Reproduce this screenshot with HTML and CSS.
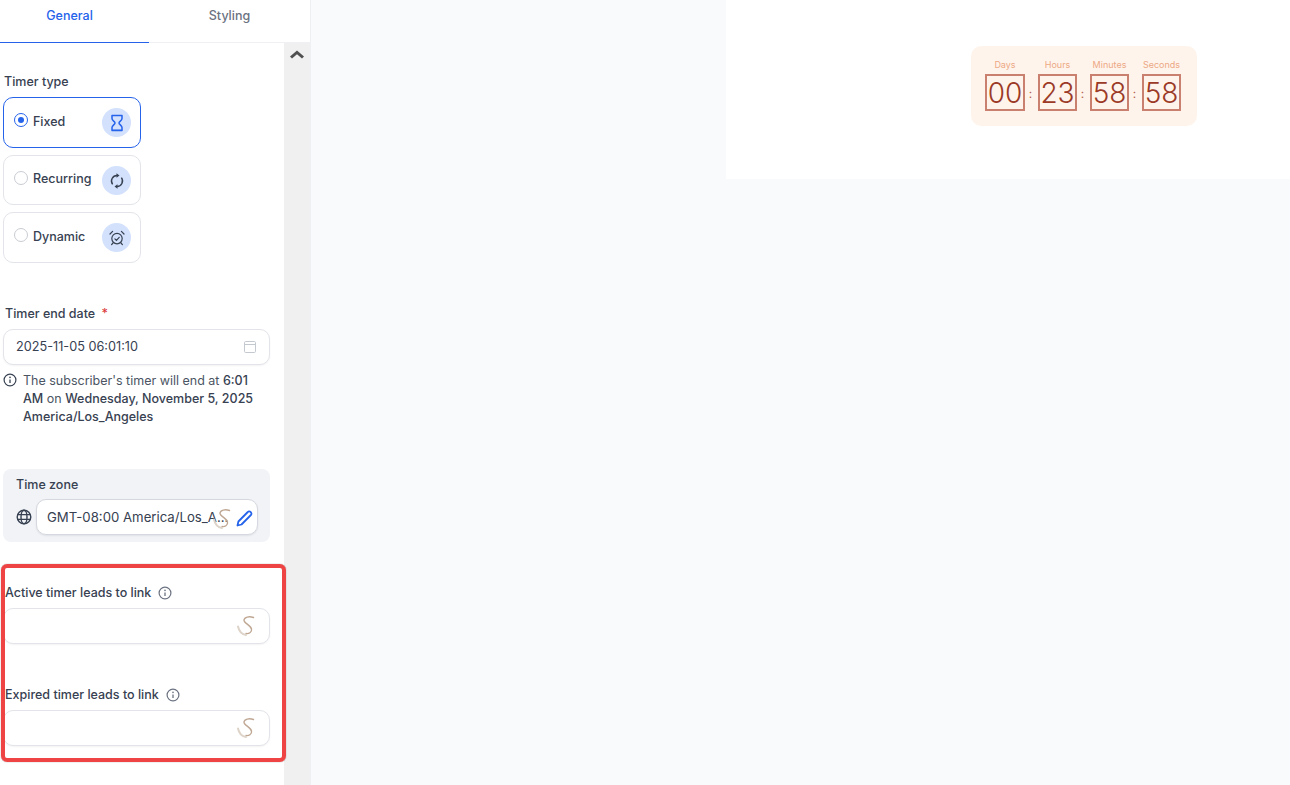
FILE: index.html
```html
<!DOCTYPE html>
<html lang="en">
<head>
<meta charset="utf-8">
<title>Timer settings</title>
<link rel="stylesheet" href="styles.css">
</head>
<body>
<svg class="defs" width="0" height="0" aria-hidden="true">
  <symbol id="squiggle" viewBox="0 0 20 22">
    <path d="M17.500 2.500 C13 1 8.500 2 8 5 C7.600 8 14.500 10 15.500 14 C16.200 17.500 12.500 19 10 18.500" fill="none" stroke="#bfa793" stroke-width="1.400" stroke-linecap="round"/>
    <path d="M2 11.500 C3 16 6 19.500 10 20" fill="none" stroke="#ddd3c8" stroke-width="2" stroke-linecap="round"/>
  </symbol>
  <symbol id="info" viewBox="0 0 14 14">
    <circle cx="7" cy="7" r="5.900" fill="none" stroke="currentColor" stroke-width="1.200"/>
    <path d="M7 6.400V10" stroke="currentColor" stroke-width="1.300"/>
    <circle cx="7" cy="4.400" r=".8" fill="currentColor"/>
  </symbol>
</svg>
<div class="app">
  <aside class="sidebar">
    <nav class="tabs">
      <div class="tab tab-active">General</div>
      <div class="tab">Styling</div>
    </nav>
    <div class="scroll-area">
      <main class="form">
        <div class="label type-label">Timer type</div>
        <div class="cards">
          <div class="card card-selected">
            <span class="radio radio-on"></span><span class="card-name">Fixed</span>
            <span class="badge">
              <svg width="16" height="18" viewBox="0 0 16 18" fill="none" stroke="#2563eb" stroke-width="1.500" stroke-linejoin="round"><path d="M3 15h10v2H3z" fill="#8fb1f5" stroke="none"/><path d="M3 1.500h10v3c0 2-3 3-3 4.500s3 2.500 3 4.500v3H3v-3c0-2 3-3 3-4.500S3 6.500 3 4.500z"/></svg>
            </span>
          </div>
          <div class="card card-recurring">
            <span class="radio"></span><span class="card-name">Recurring</span>
            <span class="badge">
              <svg width="16" height="16" viewBox="0 0 16 16" fill="none" stroke="#374151" stroke-width="1.400"><path d="M8 2.500A5.500 5.500 0 0 0 3.600 11.300"/><path d="M8 13.500A5.500 5.500 0 0 0 12.400 4.700"/><path d="M7.500 0.300v4.400L10.500 2.500z" fill="#374151" stroke="none"/><path d="M8.500 11.300v4.400L5.500 13.500z" fill="#374151" stroke="none"/></svg>
            </span>
          </div>
          <div class="card card-dynamic">
            <span class="radio"></span><span class="card-name">Dynamic</span>
            <span class="badge">
              <svg width="16" height="16" viewBox="0 0 16 16" fill="none" stroke="#374151" stroke-width="1.200" stroke-linecap="round"><circle cx="8" cy="8.600" r="5.200"/><path d="M5.900 8.800l1.500 1.500 2.800-3"/><path d="M1 4l2.600-2.600M15 4l-2.600-2.600M4 13l-1.400 1.600M12 13l1.400 1.600"/></svg>
            </span>
          </div>
        </div>

        <div class="label date-label">Timer end date <span class="req">*</span></div>
        <div class="field">
          <span class="field-text">2025-11-05 06:01:10</span>
          <svg class="cal" width="14" height="14" viewBox="0 0 14 14" fill="none" stroke="#c4c8cf" stroke-width="1"><rect x="1.500" y="1.500" width="11" height="11" rx="1.200"/><path d="M1.500 4.500h11"/></svg>
        </div>
        <div class="note">
          <svg class="note-icon"><use href="#info"/></svg>
          <p>The subscriber's timer will end at <b>6:01</b> <b>AM</b> on <b>Wednesday, November 5, 2025</b> <b>America/Los_Angeles</b></p>
        </div>

        <section class="zone">
          <div class="label zone-label">Time zone</div>
          <div class="zone-row">
            <svg class="globe" width="16" height="16" viewBox="0 0 16 16" fill="none" stroke="#374151" stroke-width="1.400"><circle cx="8" cy="8" r="6.800"/><ellipse cx="8" cy="8" rx="3" ry="6.800"/><path d="M1.600 5.600h12.800M1.600 10.400h12.800"/></svg>
            <div class="zone-input">
              <span class="zone-text">GMT-08:00 America/Los_A...</span>
              <svg class="squiggle zone-squiggle"><use href="#squiggle"/></svg>
              <svg class="pencil" width="17" height="17" viewBox="0 0 17 17" fill="none" stroke="#2563eb" stroke-width="1.800" stroke-linejoin="round"><path d="M1.500 15.500l.9-4L11.800 2a1.900 1.900 0 0 1 2.800 0l.3.3a1.900 1.900 0 0 1 0 2.700L5.500 14.500z"/></svg>
            </div>
          </div>
        </section>

        <section class="links">
          <div class="highlight"></div>
          <div class="label link-label">Active timer leads to link <svg class="label-info"><use href="#info"/></svg></div>
          <div class="field"><svg class="squiggle"><use href="#squiggle"/></svg></div>
          <div class="label link-label second">Expired timer leads to link <svg class="label-info"><use href="#info"/></svg></div>
          <div class="field"><svg class="squiggle"><use href="#squiggle"/></svg></div>
        </section>
      </main>
      <div class="scrollbar">
        <svg width="14" height="9" viewBox="0 0 14 9"><path d="M7 0.500L14 6.500 12 8.500 7 4.200 2 8.500 0 6.500z" fill="#505050"/></svg>
      </div>
    </div>
  </aside>
  <div class="canvas">
    <div class="preview">
      <div class="timer">
        <div class="unit"><span class="unit-label">Days</span><span class="digits">00</span></div>
        <span class="colon">:</span>
        <div class="unit"><span class="unit-label">Hours</span><span class="digits">23</span></div>
        <span class="colon">:</span>
        <div class="unit"><span class="unit-label">Minutes</span><span class="digits">58</span></div>
        <span class="colon">:</span>
        <div class="unit"><span class="unit-label">Seconds</span><span class="digits">58</span></div>
      </div>
    </div>
  </div>
</div>
</body>
</html>
```
FILE: styles.css
```css
* { box-sizing: border-box; }
html, body { margin: 0; height: 785px; overflow: hidden; }
body { font-family: Inter, "Liberation Sans", sans-serif; color: #374151; background: #f9fafc; }
.defs { position: absolute; }
.app { display: flex; height: 785px; }

.sidebar { width: 311px; flex: none; display: flex; flex-direction: column; background: #fff; border-right: 1px solid #eef0f3; }
.tabs { display: flex; height: 43px; flex: none; border-bottom: 1px solid #eef0f3; }
.tab { width: 149px; height: 43px; padding-top: 8px; line-height: 16px; text-align: center; font-size: 12.500px; font-weight: 500; color: #6b7280; }
.tab + .tab { width: 161px; }
.tab-active { color: #2563eb; border-bottom: 1px solid #2563eb; padding-right: 10px; }

.scroll-area { flex: 1; display: flex; min-height: 0; }
.form { width: 284px; flex: none; padding: 31px 14px 0 3px; }
.scrollbar { width: 26px; flex: none; background: #f0f0f0; padding: 7px 0 0 6px; }
.scrollbar svg { display: block; }

.label { font-size: 12.500px; font-weight: 500; line-height: 16px; color: #374151; }
.type-label { padding-left: 1px; }
.cards { display: flex; flex-direction: column; margin-top: 7px; width: 138px; }
.card { position: relative; display: flex; align-items: flex-start; height: 50px; padding: 15px 0 0 10px; border: 1px solid #e2e4e9; border-radius: 10px; }
.card-selected { height: 51px; border-color: #2563eb; }
.card-recurring { margin-top: 7px; }
.card-dynamic { margin-top: 7px; height: 51px; }
.radio { width: 14px; height: 14px; flex: none; border: 1px solid #c9ccd3; border-radius: 50%; }
.radio-on { border-color: #2563eb; position: relative; }
.radio-on::after { content: ""; position: absolute; left: 3px; top: 3px; width: 6px; height: 6px; border-radius: 50%; background: #2563eb; }
.card-name { margin-left: 5px; margin-top: -1px; font-size: 12.500px; font-weight: 500; line-height: 18px; color: #374151; }
.card-selected .card-name, .card-dynamic .card-name { margin-top: 0; }
.badge { position: absolute; right: 9px; top: 10px; width: 29px; height: 29px; border-radius: 50%; background: #d3e1fd; display: flex; align-items: center; justify-content: center; }

.date-label { margin-top: 43px; padding-left: 2px; }
.req { color: #dc3b3b; margin-left: 3px; }
.field { display: flex; align-items: center; justify-content: space-between; height: 36px; width: 267px; margin-top: 7px; padding: 0 12px; background: #fff; border: 1px solid #e2e4e9; border-radius: 10px; box-shadow: 0 1px 2px rgba(16, 24, 40, .05); }
.field-text { font-size: 12.700px; line-height: 16px; margin-top: -1px; color: #374151; }
.cal { flex: none; }
.note { display: flex; gap: 6px; margin-top: 7px; width: 267px; }
.note-icon { width: 14px; height: 14px; flex: none; margin-top: 1px; color: #374151; }
.note p { margin: 0; font-size: 12.500px; line-height: 18px; color: #4b5563; width: 240px; }
.note b { font-weight: 500; color: #374151; }

.zone { margin-top: 43px; width: 267px; height: 73px; background: #f1f3f7; border-radius: 8px; padding: 8px 12px 0 13px; }
.zone-row { display: flex; align-items: center; gap: 4px; margin-top: 6px; }
.globe { flex: none; }
.zone-input { position: relative; flex: 1; height: 36px; background: #fff; border: 1px solid #d5d8de; border-radius: 10px; padding: 0 0 0 10px; display: flex; align-items: center; box-shadow: 0 1px 2px rgba(16, 24, 40, .08); }
.zone-text { font-size: 13.200px; color: #374151; white-space: nowrap; }
.zone-squiggle { position: absolute; right: 25px; top: 8px; width: 18px; height: 20px; }
.pencil { position: absolute; right: 4px; top: 10px; }

.links { position: relative; margin-top: 43px; width: 267px; }
.highlight { position: absolute; left: -2px; top: -21px; width: 285px; height: 198px; border: 4px solid #ef4444; border-radius: 6px; box-shadow: 0 0 1px #666; }
.link-label { display: flex; align-items: center; padding-left: 2px; white-space: nowrap; }
.link-label .label-info { margin-left: 7px; }
.second { margin-top: 43px; }
.label-info { width: 14px; height: 14px; color: #6b7280; }
.links .field { justify-content: flex-end; padding-right: 13px; }
.squiggle { width: 20px; height: 22px; flex: none; }

.canvas { flex: 1; background: #f9fafc; display: flex; justify-content: flex-end; align-items: flex-start; }
.preview { width: 564px; height: 179px; background: #fff; padding: 46px 93px 0 245px; }
.timer { display: flex; align-items: flex-start; width: 226px; height: 80px; padding: 13px 14px 0; background: #fff4ec; border-radius: 10px; }
.unit { display: flex; flex-direction: column; align-items: center; width: 39px; flex: none; }
.unit:first-child { width: 40px; }
.unit-label { font-size: 9px; line-height: 12px; color: #eca884; white-space: nowrap; }
.digits { display: block; width: 100%; height: 37px; margin-top: 3px; border: 2px solid #c9806f; font-size: 28px; font-weight: 300; line-height: 34px; text-align: center; color: #9b3a26; }
.colon { width: 13px; flex: none; padding-right: 2px; text-align: center; margin-top: 27px; font-size: 12px; line-height: 16px; color: #b5644f; }
```
